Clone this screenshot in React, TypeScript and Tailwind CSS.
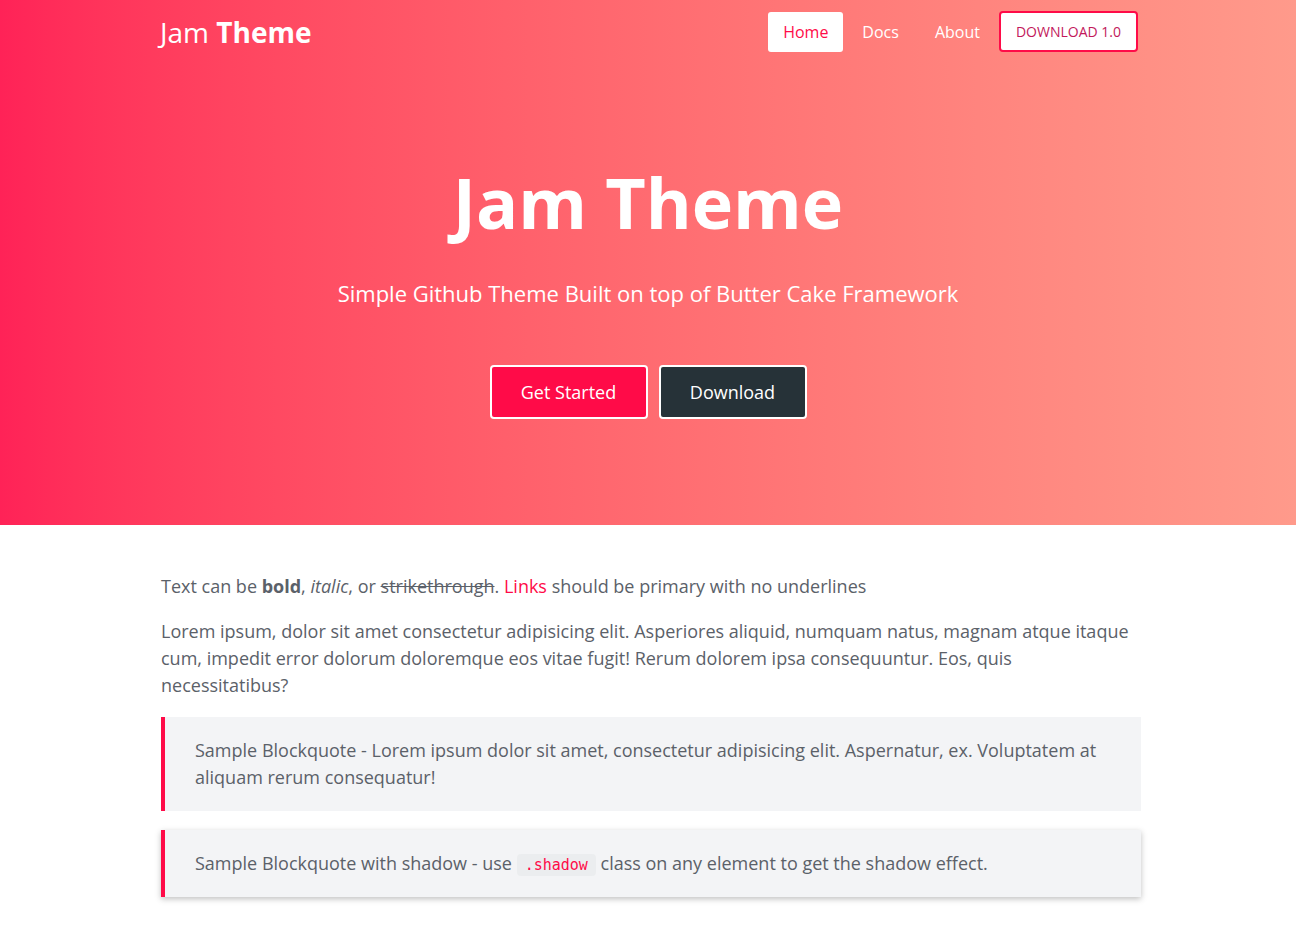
export default function App() {
  return (
    <div className="min-h-screen bg-white font-['Open_Sans',sans-serif] text-[#5b6169]">
      <header className="h-[525px] bg-gradient-to-r from-[#ff2257] to-[#ff9a8b]">
        <nav className="ml-[calc(50%-488px)] flex w-[978px] items-center justify-between pt-[11px]">
          <a href="#" className="text-[28px] leading-[40px] text-white">
            Jam <span className="font-bold">Theme</span>
          </a>
          <div className="flex items-center gap-[2px] text-[16px]">
            <a href="#" className="flex h-[40px] items-center rounded-[3px] bg-white px-[15px] text-[#ff0b48]">
              Home
            </a>
            <a href="#" className="flex h-[40px] items-center px-[17px] text-white">
              Docs
            </a>
            <a href="#" className="flex h-[40px] items-center px-[17px] text-white">
              About
            </a>
            <a
              href="#"
              className="flex h-[41px] items-center rounded-[4px] border-2 border-[#ff0b48] bg-white px-[15px] text-[14px] uppercase text-[#c2185b]"
            >
              Download 1.0
            </a>
          </div>
        </nav>
        <div className="flex flex-col items-center pt-[105px] text-white">
          <h1 className="text-[70px] font-bold leading-[90px]">Jam Theme</h1>
          <p className="mt-[31px] text-[22px] leading-[30px]">
            Simple Github Theme Built on top of Butter Cake Framework
          </p>
          <div className="mt-[57px] flex gap-[11px] text-[18px]">
            <a
              href="#"
              className="flex h-[54px] w-[158px] items-center justify-center rounded-[4px] border-2 border-white bg-[#ff0b48] text-white"
            >
              Get Started
            </a>
            <a
              href="#"
              className="flex h-[54px] w-[148px] items-center justify-center rounded-[4px] border-2 border-white bg-[#263238] text-white"
            >
              Download
            </a>
          </div>
        </div>
      </header>

      <main className="ml-[calc(50%-487px)] w-[980px] pt-[48px] text-[18px] leading-[27px]">
        <p>
          Text can be <strong className="font-bold">bold</strong>, <em>italic</em>, or{" "}
          <s>strikethrough</s>.{" "}
          <a href="#" className="text-[#ff0b48]">
            Links
          </a>{" "}
          should be primary with no underlines
        </p>
        <p className="mt-[18px]">
          Lorem ipsum, dolor sit amet consectetur adipisicing elit. Asperiores aliquid, numquam natus, magnam atque itaque
          cum, impedit error dolorum doloremque eos vitae fugit! Rerum dolorem ipsa consequuntur. Eos, quis
          necessitatibus?
        </p>
        <blockquote className="mt-[18px] border-l-4 border-[#ff0b48] bg-[#f3f4f6] py-[20px] pl-[30px] pr-[30px]">
          Sample Blockquote - Lorem ipsum dolor sit amet, consectetur adipisicing elit. Aspernatur, ex. Voluptatem at
          aliquam rerum consequatur!
        </blockquote>
        <blockquote className="mt-[19px] border-l-4 border-[#ff0b48] bg-[#f3f4f6] py-[20px] pl-[30px] pr-[30px] shadow-[0_2px_6px_rgba(0,0,0,0.25)]">
          Sample Blockquote with shadow - use{" "}
          <code className="rounded-[4px] bg-[#ebedef] px-[8px] py-[2px] font-['DejaVu_Sans_Mono',monospace] text-[15px] leading-[20px] text-[#ff0b48]">
            .shadow
          </code>{" "}
          class on any element to get the shadow effect.
        </blockquote>
      </main>
    </div>
  );
}
